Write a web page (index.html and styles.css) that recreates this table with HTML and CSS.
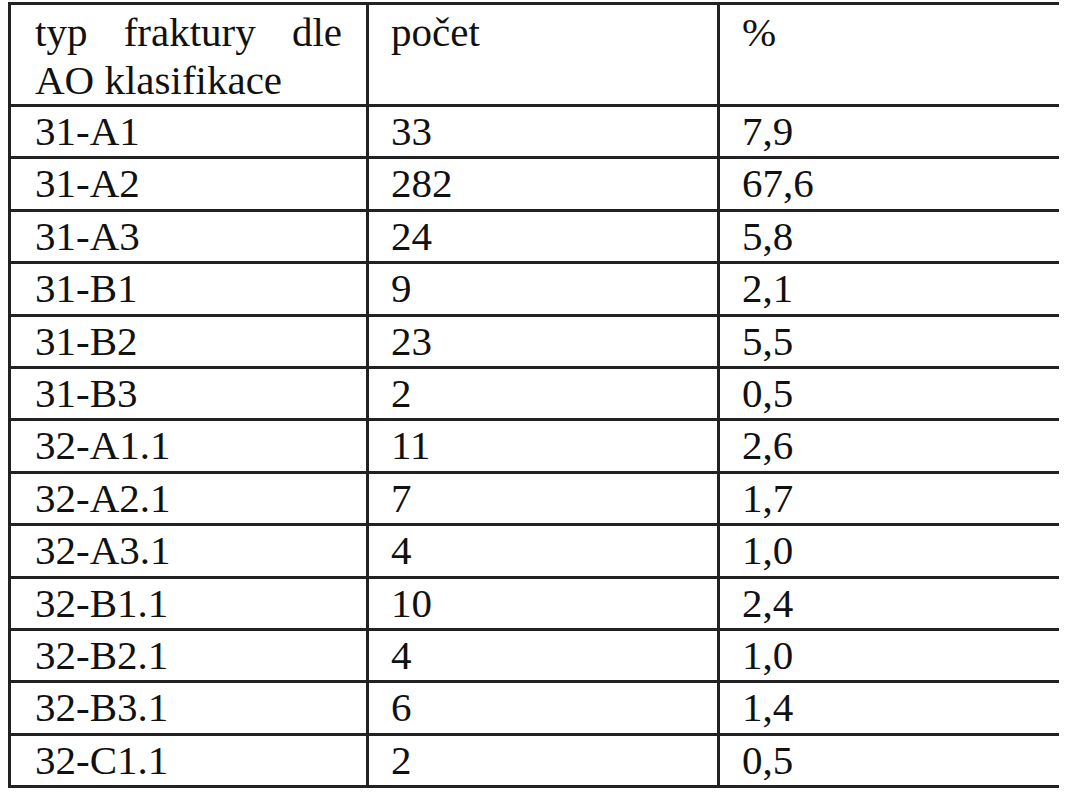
FILE: index.html
```html
<!DOCTYPE html>
<html>
<head>
<meta charset="utf-8">
<title>Typ fraktury dle AO klasifikace</title>
<link rel="stylesheet" href="styles.css">
</head>
<body class="page">
<div class="grid">
  <div class="cell head c-first justify">typ fraktury dle AO klasifikace</div>
  <div class="cell head">počet</div>
  <div class="cell head">%</div>

  <div class="cell c-first">31-A1</div><div class="cell">33</div><div class="cell">7,9</div>
  <div class="cell c-first">31-A2</div><div class="cell">282</div><div class="cell">67,6</div>
  <div class="cell c-first">31-A3</div><div class="cell">24</div><div class="cell">5,8</div>
  <div class="cell c-first">31-B1</div><div class="cell">9</div><div class="cell">2,1</div>
  <div class="cell c-first">31-B2</div><div class="cell">23</div><div class="cell">5,5</div>
  <div class="cell c-first">31-B3</div><div class="cell">2</div><div class="cell">0,5</div>
  <div class="cell c-first">32-A1.1</div><div class="cell">11</div><div class="cell">2,6</div>
  <div class="cell c-first">32-A2.1</div><div class="cell">7</div><div class="cell">1,7</div>
  <div class="cell c-first">32-A3.1</div><div class="cell">4</div><div class="cell">1,0</div>
  <div class="cell c-first">32-B1.1</div><div class="cell">10</div><div class="cell">2,4</div>
  <div class="cell c-first">32-B2.1</div><div class="cell">4</div><div class="cell">1,0</div>
  <div class="cell c-first">32-B3.1</div><div class="cell">6</div><div class="cell">1,4</div>
  <div class="cell c-first">32-C1.1</div><div class="cell">2</div><div class="cell">0,5</div>
</div>
</body>
</html>
```

FILE: styles.css
```css
html, body {
  margin: 0;
  padding: 0;
  background: #ffffff;
}

.page {
  padding: 2px 0 0 8px;
  font-family: "Liberation Serif", "Tinos", "Times New Roman", serif;
  color: #111111;
}

.grid {
  display: grid;
  width: 1051px;
  grid-template-columns: 355px 348px 339px;
  grid-template-rows: 99px repeat(13, 49.4px);
  column-gap: 3px;
  row-gap: 3px;
  padding: 3px 0 3px 3px;
  background: #222222;
  box-sizing: border-box;
}

.cell {
  background: #ffffff;
  font-family: "Liberation Serif", "Tinos", "Times New Roman", serif;
  font-size: 41px;
  line-height: 49px;
  color: #111111;
  padding: 0 22px;
  white-space: nowrap;
}

.cell.c-first {
  padding-left: 24px;
  padding-right: 24px;
}

.cell.head {
  line-height: 48px;
  padding-top: 3px;
  white-space: normal;
}

.cell.justify {
  text-align: justify;
}
```
